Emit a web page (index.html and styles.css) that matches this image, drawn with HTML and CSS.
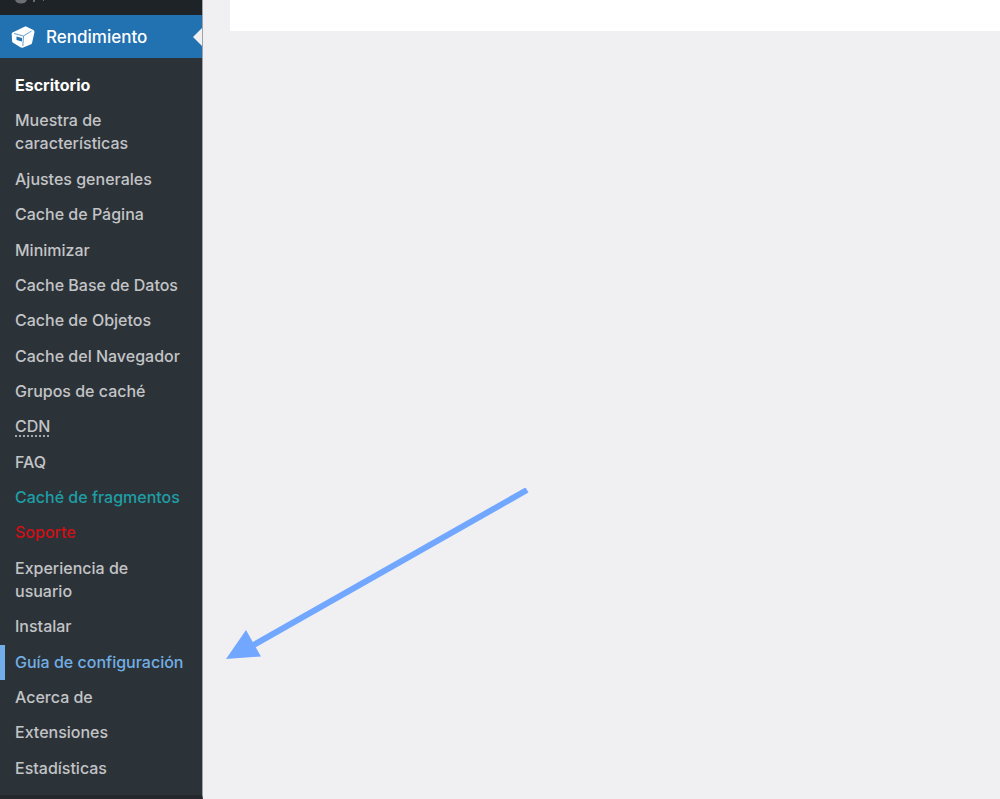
FILE: index.html
```html
<!DOCTYPE html>
<html lang="es">
<head>
<meta charset="utf-8">
<title>Rendimiento</title>
<link rel="stylesheet" href="styles.css">
</head>
<body>
<div class="page">
  <aside class="sidebar">
    <div class="top-strip">
      <svg class="top-icon" width="34" height="6" viewBox="0 0 34 6"><path d="M3 0c1 2.500 3 3.500 6 3.500s5-1 6-3.500zM21 0h2v2h-2zM31 0h1v1h-1z" fill="#6c7074"/></svg>
    </div>
    <div class="current">
      <svg class="logo" width="24" height="22" viewBox="0 0 24 22">
        <path d="M1.500 6.500 13.500.8c1-.4 1.800-.3 2.600.1l5.800 2.800c1.300.6 1.800 1.500 1.500 2.800l-2.300 10.200c-.2.900-.7 1.500-1.500 1.900l-7.400 2.800c-1 .4-1.900.3-2.800-.2L2.500 17c-.9-.5-1.300-1.200-1.400-2.100L.7 8c0-.7.200-1.200.8-1.500z" fill="#fff"/>
        <path d="M3 7.500 12.500 10l8-5M12.500 10l-.7 10" fill="none" stroke="#5f9fd0" stroke-width="1"/>
        <path d="M5.500 10.500l5.500 1.500v3.500l-5.500-1.500z" fill="#2271b1"/>
      </svg>
      <span class="current-label">Rendimiento</span>
      <span class="notch"></span>
    </div>
    <ul class="menu">
      <li class="item strong">Escritorio</li>
      <li class="item">Muestra de características</li>
      <li class="item">Ajustes generales</li>
      <li class="item">Cache de Página</li>
      <li class="item">Minimizar</li>
      <li class="item">Cache Base de Datos</li>
      <li class="item">Cache de Objetos</li>
      <li class="item">Cache del Navegador</li>
      <li class="item">Grupos de caché</li>
      <li class="item"><abbr class="abbr">CDN</abbr></li>
      <li class="item">FAQ</li>
      <li class="item teal">Caché de fragmentos</li>
      <li class="item red">Soporte</li>
      <li class="item">Experiencia de usuario</li>
      <li class="item">Instalar</li>
      <li class="item active">Guía de configuración</li>
      <li class="item">Acerca de</li>
      <li class="item">Extensiones</li>
      <li class="item">Estadísticas</li>
    </ul>
  </aside>
  <main class="content">
    <div class="white-bar"></div>
  </main>
  <svg class="arrow" width="320" height="190" viewBox="0 0 320 190">
    <path d="M301 2 24 159" fill="none" stroke="#72a7ff" stroke-width="6"/>
    <path d="M0 171 20 142 35 168.500z" fill="#72a7ff"/>
  </svg>
</div>
</body>
</html>
```
FILE: styles.css
```css
* { box-sizing: border-box; }
html, body { margin: 0; padding: 0; height: 100%; overflow: hidden; }
body { background: #f0f0f3; font-family: Inter, "Liberation Sans", sans-serif; }
.page { position: relative; display: flex; height: 799px; }
.sidebar { width: 203px; height: 799px; flex: none; background: #2c3338; border-right: 1px solid #a0a3a7; border-bottom: 4px solid #24282c; display: flex; flex-direction: column; }
.top-strip { height: 15px; flex: none; background: #1d2327; padding-left: 12px; }
.top-icon { display: block; }
.current { position: relative; height: 43px; flex: none; background: #2271b1; display: flex; align-items: center; padding-left: 11px; gap: 11px; }
.logo { flex: none; }
.current-label { color: #fff; font-size: 17px; font-weight: 500; }
.notch { position: absolute; right: 0; top: 13px; border-style: solid; border-color: transparent; border-width: 9px 9px 9px 0; border-right-color: #f0f0f3; }
.menu { list-style: none; margin: 0; padding: 9.800px 0 0; }
.item { padding: 6px 14px 6px 15px; font-size: 16px; font-weight: 500; line-height: 23.350px; color: #c3c4c7; }
.strong { color: #fff; font-weight: 700; }
.teal { color: #1e9ea5; }
.red { color: #d10f16; }
.active { color: #72aee6; box-shadow: inset 5px 0 0 #72aeea; }
.abbr { text-decoration: underline dotted; text-underline-offset: 3px; }
.content { flex: 1; padding: 0 0 0 27px; }
.white-bar { height: 31px; background: #fff; }
.arrow { position: absolute; left: 226px; top: 488px; }
```
